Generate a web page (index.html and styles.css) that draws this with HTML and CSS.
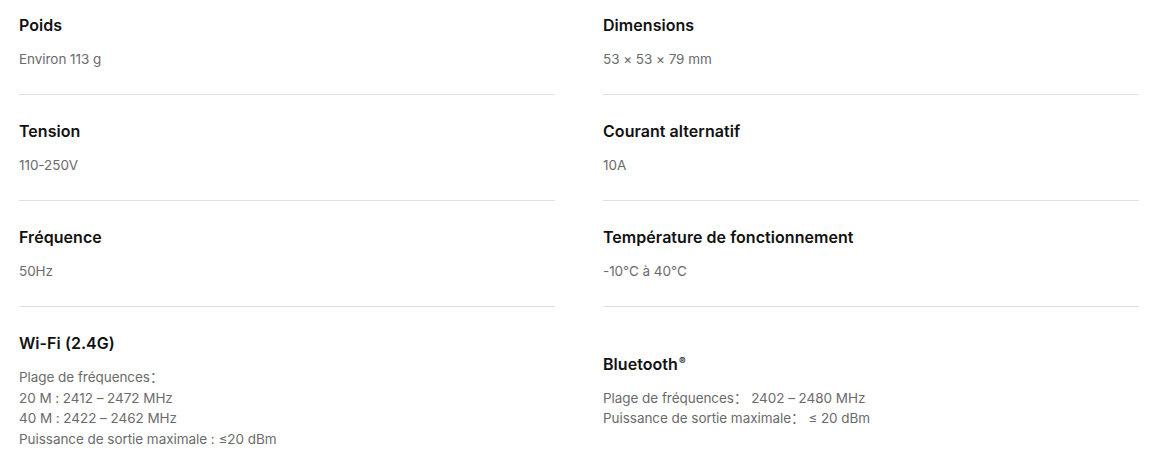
FILE: index.html
```html
<!DOCTYPE html>
<html lang="fr">
<head>
<meta charset="utf-8">
<link rel="stylesheet" href="styles.css">
</head>
<body>
<div class="specs">
  <div class="cell"><div class="title">Poids</div><div class="value">Environ 113 g</div></div>
  <div class="cell"><div class="title">Dimensions</div><div class="value">53 × 53 × 79 mm</div></div>
  <div class="cell"><div class="title">Tension</div><div class="value">110-250V</div></div>
  <div class="cell"><div class="title">Courant alternatif</div><div class="value">10A</div></div>
  <div class="cell"><div class="title">Fréquence</div><div class="value">50Hz</div></div>
  <div class="cell"><div class="title">Température de fonctionnement</div><div class="value">-10°C à 40°C</div></div>
  <div class="cell last"><div class="title">Wi-Fi (2.4G)</div><div class="value">Plage de fréquences：<br>20 M : 2412 – 2472 MHz<br>40 M : 2422 – 2462 MHz<br>Puissance de sortie maximale : ≤20 dBm</div></div>
  <div class="cell last"><div class="title">Bluetooth<span class="reg">®</span></div><div class="value">Plage de fréquences：&nbsp;2402 – 2480 MHz<br>Puissance de sortie maximale：&nbsp;≤ 20 dBm</div></div>
</div>
</body>
</html>
```
FILE: styles.css
```css
* { box-sizing: border-box; }
body {
  margin: 0;
  background: #fff;
  font-family: Inter, "Noto Sans", "Noto Sans CJK SC", sans-serif;
}
.specs {
  display: grid;
  grid-template-columns: 536px 536px;
  column-gap: 48px;
  align-items: center;
  padding: 0 14px 0 19px;
}
.cell {
  padding: 25px 0 24px;
  border-bottom: 1px solid #e0e0e0;
}
.cell:nth-child(1), .cell:nth-child(2) { padding-top: 14px; }
.cell.last { border-bottom: none; padding-bottom: 0; }
.title {
  font-size: 16px;
  font-weight: 600;
  line-height: 22px;
  color: #111;
  letter-spacing: 0.05px;
}
.reg {
  font-size: 10px;
  vertical-align: 5px;
  line-height: 0;
  margin-left: 1px;
}
.value {
  margin-top: 13px;
  font-size: 13.5px;
  line-height: 21px;
  color: #6b6b6b;
  letter-spacing: -0.05px;
}
.last .value {
  line-height: 20.67px;
}
```
